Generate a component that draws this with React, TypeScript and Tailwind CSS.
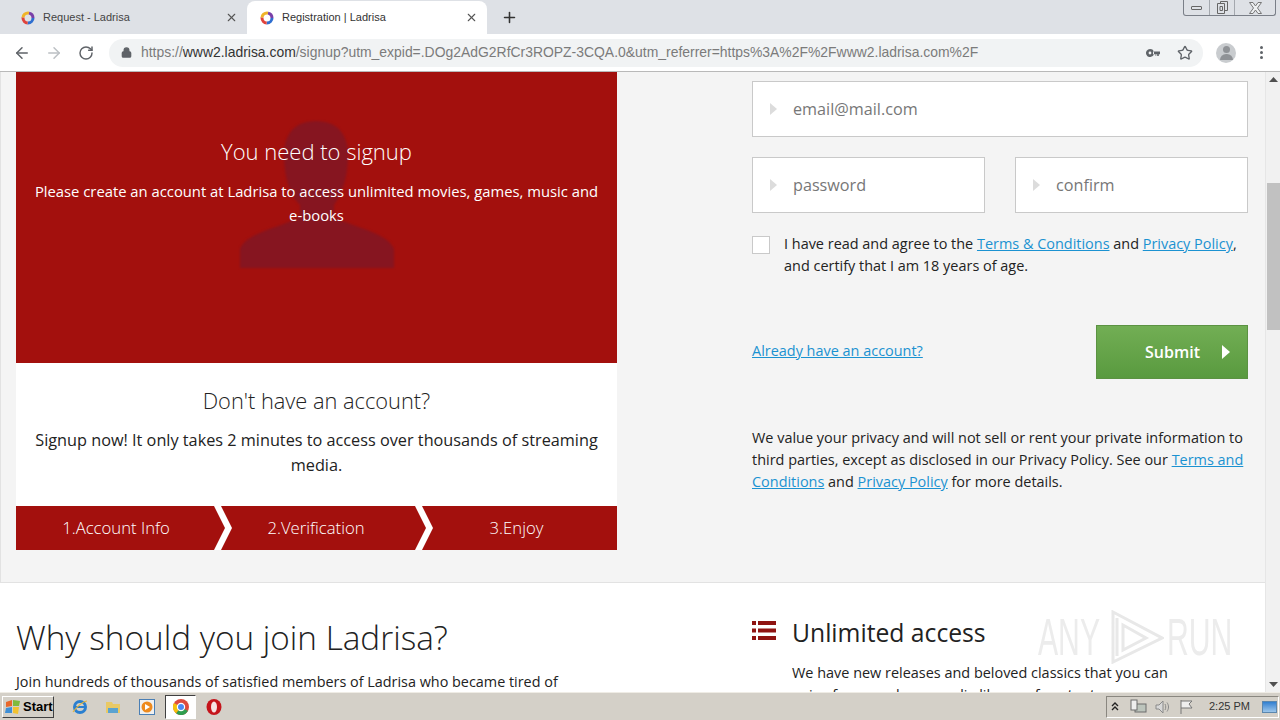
import React from 'react'
import { ArrowLeft, ArrowRight, RotateCw, Lock, Star, Plus, X } from 'lucide-react'

const Favicon = () => (
  <svg width="14" height="14" viewBox="0 0 14 14" className="shrink-0">
    <circle cx="7" cy="7" r="5" fill="none" stroke="#2f6fd0" strokeWidth="3" strokeDasharray="8 24" />
    <circle cx="7" cy="7" r="5" fill="none" stroke="#e0433c" strokeWidth="3" strokeDasharray="8 24" strokeDashoffset="-8" />
    <circle cx="7" cy="7" r="5" fill="none" stroke="#f0b429" strokeWidth="3" strokeDasharray="8 24" strokeDashoffset="-16" />
    <circle cx="7" cy="7" r="5" fill="none" stroke="#7a3fa8" strokeWidth="3" strokeDasharray="8 24" strokeDashoffset="-24" />
  </svg>
)

const Caret = () => (
  <svg width="7" height="12" viewBox="0 0 7 12" className="shrink-0">
    <path d="M0 0 L7 6 L0 12 Z" fill="#dcdcdc" />
  </svg>
)

const Field = ({ text, className }: { text: string; className: string }) => (
  <div className={`h-14 flex items-center bg-white border border-[#c9c9c9] pl-[17px] ${className}`}>
    <Caret />
    <span className="ml-[16px] text-[16.2px] text-[#777]">{text}</span>
  </div>
)

const Chevron = ({ className }: { className: string }) => (
  <svg width="20" height="44" viewBox="0 0 20 44" className={`absolute top-0 ${className}`}>
    <path d="M0 0 H7 L18 22 L7 44 H0 L11 22 Z" fill="#fff" />
  </svg>
)

const TabStrip = () => (
  <div className="h-[34px] bg-[#dee1e6] flex items-end pl-2 relative shrink-0">
    <div className="w-[239px] h-[33px] flex items-center pl-[13px] pr-[9px] text-[#444]">
      <Favicon />
      <span className="ml-[8px] text-[11px] flex-1">Request - Ladrisa</span>
      <X size={13} strokeWidth={2} color="#555" />
    </div>
    <div className="w-[240px] h-[33px] bg-white rounded-t-lg flex items-center pl-[13px] pr-[9px] text-[#333]">
      <Favicon />
      <span className="ml-[8px] text-[11px] flex-1">Registration | Ladrisa</span>
      <X size={13} strokeWidth={2} color="#555" />
    </div>
    <Plus size={17} strokeWidth={2.2} color="#333" className="ml-[14px] mb-[8px]" />
    <div className="absolute top-0 left-[1183px] w-[93px] h-[16px] border border-t-0 border-[#7a7f88] rounded-b-[3px] flex items-center">
      <div className="w-[25px] flex justify-center"><div className="w-[11px] h-[4px] border border-[#666] rounded-[1px]" /></div>
      <div className="w-[26px] flex justify-center border-x border-[#a4a8ae] h-full items-center">
        <svg width="11" height="13" viewBox="0 0 11 13"><path d="M3.5 2.5V0.5H10.5V9.5H8M0.5 2.5H7.5V12.5H0.5ZM3 5.5H5.5V9.5H3Z" fill="none" stroke="#666" /></svg>
      </div>
      <div className="flex-1 flex justify-center">
        <svg width="13" height="12" viewBox="0 0 13 12"><path d="M0.5 0.5H4L6.5 4L9 0.5H12.5L8.5 6L12.5 11.5H9L6.5 8L4 11.5H0.5L4.5 6Z" fill="#eef0f2" stroke="#777" /></svg>
      </div>
    </div>
  </div>
)

const Toolbar = () => (
  <div className="h-[38px] bg-white border-b border-[#b9b9b9] flex items-center pl-[13px] shrink-0">
    <ArrowLeft size={18} strokeWidth={2} color="#5f6368" />
    <ArrowRight size={18} strokeWidth={2} color="#bcc0c4" className="ml-[14px]" />
    <RotateCw size={16} strokeWidth={2.2} color="#5f6368" className="ml-[15px]" />
    <div className="ml-[15px] w-[1094px] h-[28px] bg-[#f1f3f4] rounded-full flex items-center pl-[12px]">
      <Lock size={11} strokeWidth={3} color="#5f6368" fill="#5f6368" />
      <span className="ml-[9px] text-[13.93px] text-[#7b7b7b] whitespace-nowrap flex-1">
        https://<span className="text-[#333]">www2.ladrisa.com</span>/signup?utm_expid=.DOg2AdG2RfCr3ROPZ-3CQA.0&amp;utm_referrer=https%3A%2F%2Fwww2.ladrisa.com%2F
      </span>
      <svg width="14" height="8" viewBox="0 0 14 8" className="shrink-0">
        <path d="M4 0a4 4 0 1 1-3.7 5.5A4 4 0 0 1 4 0Zm0 2.6a1.4 1.4 0 1 0 0 2.8 1.4 1.4 0 0 0 0-2.8ZM7 2.6h7v2.6h-1.2V7h-1.6V5.2h-1V7H9.6V5.2H7Z" fill="#5f6368" fillRule="evenodd" />
      </svg>
      <Star size={16} strokeWidth={2} color="#5f6368" className="ml-[17px] mr-[10px]" />
    </div>
    <div className="ml-[13px] w-[20px] h-[20px] rounded-full bg-[#c9cccf] flex flex-col items-center justify-center overflow-hidden">
      <div className="w-[7px] h-[7px] rounded-full bg-[#8f9296]" />
      <div className="w-[13px] h-[6px] rounded-t-full bg-[#8f9296] mt-[1px]" />
    </div>
    <div className="ml-[24px] flex flex-col gap-[2px]">
      <div className="w-[3px] h-[3px] rounded-full bg-[#5f6368]" />
      <div className="w-[3px] h-[3px] rounded-full bg-[#5f6368]" />
      <div className="w-[3px] h-[3px] rounded-full bg-[#5f6368]" />
    </div>
  </div>
)

const SignupPanel = () => (
  <div className="w-[601px]">
    <div className="relative h-[291px] bg-[#a3100d] text-white text-center overflow-hidden">
      <svg width="160" height="150" viewBox="0 0 160 150" className="absolute left-[222px] top-[49px] blur-[1px]">
        <path d="M78 0 C100 0 110 14 110 34 C110 60 102 76 96 84 L96 96 C120 108 150 112 156 128 L156 147 L2 147 L2 128 C8 112 38 108 62 96 L62 84 C54 76 46 60 46 34 C46 14 56 0 78 0 Z" fill="#861520" />
      </svg>
      <div className="relative pt-[64px] text-[22px] font-light leading-[30px]">You need to signup</div>
      <p className="relative mt-[13px] px-[16px] text-[14.8px] leading-[24px]">
        Please create an account at Ladrisa to access unlimited movies, games, music and e-books
      </p>
    </div>
    <div className="h-[143px] bg-white text-center text-[#222] pt-[23px]">
      <div className="text-[21.8px] font-light leading-[30px]">Don't have an account?</div>
      <p className="mt-[12px] px-[16px] text-[16.25px] leading-[25px]">
        Signup now! It only takes 2 minutes to access over thousands of streaming media.
      </p>
    </div>
    <div className="relative h-[44px] bg-[#a3100d] text-white text-[16.7px] font-light flex items-center">
      <div className="w-[200px] text-center">1.Account Info</div>
      <div className="w-[200px] text-center">2.Verification</div>
      <div className="flex-1 text-center">3.Enjoy</div>
      <Chevron className="left-[198px]" />
      <Chevron className="left-[399px]" />
    </div>
  </div>
)

const SignupForm = () => (
  <div className="w-[496px] ml-[135px] pt-[9px] text-[14.45px] text-[#222]">
    <Field text="email@mail.com" className="w-full" />
    <div className="flex justify-between mt-[20px]">
      <Field text="password" className="w-[233px]" />
      <Field text="confirm" className="w-[233px]" />
    </div>
    <div className="flex mt-[20px]">
      <div className="w-[18px] h-[18px] mt-[3px] bg-white border border-[#c9c9c9] shrink-0" />
      <p className="ml-[14px] leading-[22px]">
        I have read and agree to the <a className="text-[#1b92d1] underline">Terms &amp; Conditions</a> and <a className="text-[#1b92d1] underline">Privacy Policy</a>, and certify that I am 18 years of age.
      </p>
    </div>
    <div className="flex justify-between items-center mt-[48px]">
      <a className="text-[#1b92d1] underline -mt-[3px]">Already have an account?</a>
      <div className="w-[152px] h-[54px] bg-gradient-to-b from-[#72ae54] to-[#599a3f] border border-[#5b9242] flex items-center text-white text-[16px] font-semibold pl-[48px]">
        Submit
        <svg width="8" height="14" viewBox="0 0 8 14" className="ml-[22px]"><path d="M0 0 L8 7 L0 14 Z" fill="#fff" /></svg>
      </div>
    </div>
    <p className="mt-[48px] leading-[22px]">
      We value your privacy and will not sell or rent your private information to third parties, except as disclosed in our Privacy Policy. See our <a className="text-[#1b92d1] underline">Terms and Conditions</a> and <a className="text-[#1b92d1] underline">Privacy Policy</a> for more details.
    </p>
  </div>
)

const Watermark = () => (
  <div className="absolute left-[1038px] top-[27px] flex items-center text-[52px] font-['Liberation_Sans',sans-serif] font-light text-[#ececec] leading-none pointer-events-none">
    <span className="inline-block w-[72px] origin-left scale-x-[0.58]">ANY</span>
    <svg width="54" height="54" viewBox="0 0 54 54"><path d="M3 2 L52 28 L3 52 Z M13 15 L36 28 L13 40 Z M7 8V46" fill="none" stroke="#e8e8e8" strokeWidth="3" /></svg>
    <span className="inline-block w-[66px] origin-left scale-x-[0.58] ml-[3px]">RUN</span>
  </div>
)

const WhyJoin = () => (
  <div className="relative h-[109px] bg-white flex px-[16px] text-[#222] overflow-hidden">
    <div className="w-[601px] pt-[32px]">
      <h2 className="text-[33.3px] font-light leading-[44px] whitespace-nowrap">Why should you join Ladrisa?</h2>
      <p className="mt-[12px] text-[14.4px] leading-[22px] whitespace-nowrap">
        Join hundreds of thousands of satisfied members of Ladrisa who became tired of
      </p>
    </div>
    <div className="ml-[135px] flex-1 pt-[38px] flex">
      <svg width="24" height="20" viewBox="0 0 24 20" className="shrink-0">
        <path d="M0 0h4v4H0zM6 0h18v4H6zM0 7.5h4v4H0zM6 7.5h18v4H6zM0 15h4v4H0zM6 15h18v4H6z" fill="#8f1311" />
      </svg>
      <div className="ml-[16px] -mt-[5px]">
        <div className="text-[24.7px] leading-[34px]">Unlimited access</div>
        <p className="mt-[12px] text-[14.45px] leading-[22px] w-[385px]">
          We have new releases and beloved classics that you can enjoy from our huge media library of content
        </p>
      </div>
    </div>
    <Watermark />
  </div>
)

const Scrollbar = () => (
  <div className="w-[15px] bg-[#f1f1f1] border-l border-[#e6e6e6] flex flex-col items-center shrink-0">
    <svg width="9" height="5" viewBox="0 0 9 5" className="mt-[5px]"><path d="M0 5 L4.5 0 L9 5 Z" fill="#505050" /></svg>
    <div className="w-[13px] h-[147px] mt-[101px] bg-[#c1c1c1]" />
    <div className="flex-1" />
    <svg width="9" height="5" viewBox="0 0 9 5" className="mb-[5px]"><path d="M0 0 L4.5 5 L9 0 Z" fill="#505050" /></svg>
  </div>
)

const Taskbar = () => (
  <div className="h-[28px] bg-[#d4d0c8] border-t border-[#efece5] flex items-center relative shrink-0 font-['Liberation_Sans',sans-serif]">
    <div className="ml-[2px] w-[52px] h-[22px] border border-t-white border-l-white border-r-[#404040] border-b-[#404040] flex items-center pl-[2px] text-[13px] font-bold text-black">
      <svg width="16" height="16" viewBox="0 0 16 16"><path d="M1 3 L7 1 L7 7 L1 8 Z" fill="#e8672b" /><path d="M8 1 L15 2 L14 7 L8 7 Z" fill="#7fba3d" /><path d="M1 9 L7 8 L7 14 L0 14 Z" fill="#3f8fd6" /><path d="M8 8 L14 8 L13 15 L8 14 Z" fill="#f2c230" /></svg>
      <span className="ml-[2px]">Start</span>
    </div>
    <svg width="16" height="16" viewBox="0 0 16 16" className="ml-[18px]"><circle cx="8" cy="8" r="5.5" fill="none" stroke="#2a7fd0" strokeWidth="3" /><path d="M4 8h8" stroke="#2a7fd0" strokeWidth="2" /><path d="M1 13 C6 6 12 2 15 2" stroke="#e6b53a" strokeWidth="1.2" fill="none" /></svg>
    <svg width="16" height="16" viewBox="0 0 16 16" className="ml-[17px]"><path d="M1 3h6l1 2h7v9H1z" fill="#e9c965" /><rect x="3" y="9" width="10" height="5" fill="#5ba3d0" /></svg>
    <svg width="16" height="16" viewBox="0 0 16 16" className="ml-[18px]"><rect x="0.5" y="0.5" width="15" height="15" fill="#f0f0f0" stroke="#4a7fb5" /><circle cx="8" cy="8" r="5.5" fill="#ee8a1d" /><path d="M6 5 L11 8 L6 11 Z" fill="#fff" /></svg>
    <div className="ml-[10px] w-[31px] h-[24px] bg-white border border-t-[#404040] border-l-[#404040] border-r-white border-b-white flex items-center justify-center">
      <svg width="16" height="16" viewBox="0 0 16 16">
        <circle cx="8" cy="8" r="8" fill="#dd4b3e" />
        <path d="M8 8 L15 12 A8 8 0 0 1 3 14.2 Z" fill="#2f9e4f" />
        <path d="M8 8 L3 14.2 A8 8 0 0 1 1 4 Z" fill="#f4c20d" />
        <circle cx="8" cy="8" r="3.6" fill="#4a8af4" stroke="#fff" strokeWidth="1.2" />
      </svg>
    </div>
    <svg width="16" height="16" viewBox="0 0 16 16" className="ml-[10px]"><ellipse cx="8" cy="8" rx="7.5" ry="8" fill="#c5141b" /><ellipse cx="8" cy="8" rx="3" ry="5.5" fill="#f6e3e3" /></svg>
    <div className="flex-1" />
    <div className="h-[22px] w-[173px] border border-t-[#8a8780] border-l-[#8a8780] border-r-white border-b-white flex items-center text-[#333] text-[11px] mr-[1px]">
      <svg width="8" height="10" viewBox="0 0 8 10" className="ml-[4px] shrink-0"><path d="M1 4 L4 1 L7 4 M1 8 L4 5 L7 8" stroke="#222" strokeWidth="1.4" fill="none" /></svg>
      <svg width="18" height="16" viewBox="0 0 18 16" className="ml-[10px] shrink-0"><rect x="6" y="5" width="11" height="8" fill="#bcc4bc" stroke="#6c6c6c" /><rect x="2" y="1" width="6" height="10" fill="#eee" stroke="#6c6c6c" /></svg>
      <svg width="16" height="16" viewBox="0 0 16 16" className="ml-[7px] shrink-0"><path d="M2 6h3l4-4v12l-4-4H2z" fill="#d8d8d8" stroke="#8a8a8a" /><path d="M11 5c1 2 1 4 0 6M13 3.5c2 3 2 6 0 9" stroke="#8a8a8a" fill="none" /></svg>
      <svg width="16" height="16" viewBox="0 0 16 16" className="ml-[8px] shrink-0"><path d="M3 1v14M3 2h11l-3 3 3 4H3" stroke="#777" fill="#eee" /></svg>
      <span className="ml-[15px] whitespace-nowrap">2:25 PM</span>
      <div className="ml-[12px] w-[15px] h-[12px] bg-gradient-to-b from-[#2f7fd0] to-[#9cc6ea] border border-[#5b87ae] shrink-0" />
    </div>
  </div>
)

export default function App() {
  return (
    <div className="w-[1280px] h-[720px] flex flex-col overflow-hidden bg-white font-['Open_Sans',sans-serif]">
      <div className="font-['Liberation_Sans',sans-serif]">
        <TabStrip />
        <Toolbar />
      </div>
      <div className="flex-1 flex min-h-0">
        <div className="flex-1 min-w-0">
          <div className="h-[511px] bg-[#f4f4f4] border-b border-l border-[#e2e2e2] flex pl-[15px] pr-[16px]">
            <SignupPanel />
            <SignupForm />
          </div>
          <WhyJoin />
        </div>
        <Scrollbar />
      </div>
      <Taskbar />
    </div>
  )
}
